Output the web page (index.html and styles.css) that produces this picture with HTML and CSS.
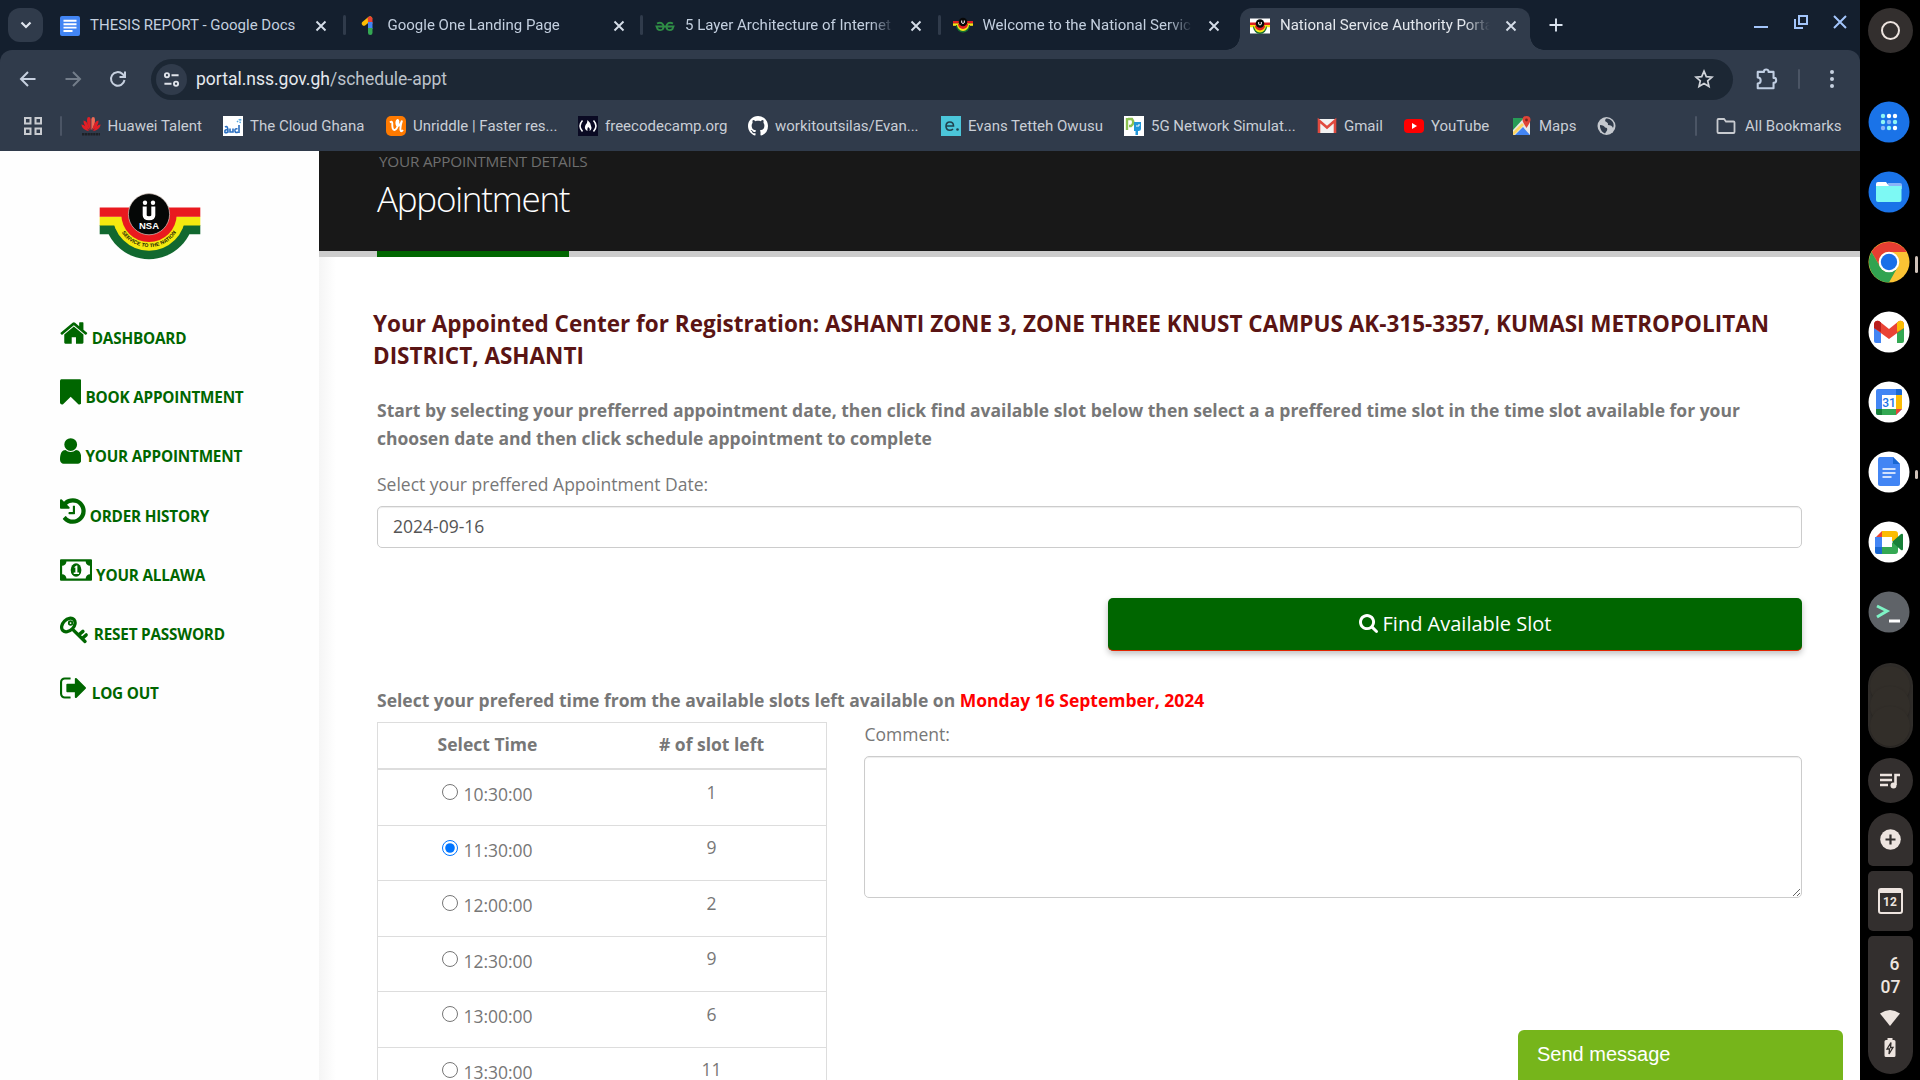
FILE: index.html
```html
<!DOCTYPE html>
<html lang="en">
<head>
<meta charset="utf-8">
<title>National Service Authority Portal</title>
<link rel="stylesheet" href="styles.css">
</head>
<body>
<svg class="defs" width="0" height="0" aria-hidden="true">
  <defs>
    <symbol id="close" viewBox="0 0 12 12"><path d="M1.5 1.5l9 9M10.5 1.5l-9 9" stroke="currentColor" stroke-width="1.9" fill="none"/></symbol>
    <symbol id="nss-fav" viewBox="0 0 20 20">
      <path d="M0 5h20v2.600H0z" fill="#e02020"/><path d="M0 7.400h20v2.400H0z" fill="#f5e616"/>
      <path d="M3 9a7 7.500 0 0 0 14 0z" fill="#16702f"/><path d="M4 8.500a6 6.500 0 0 0 12 0z" fill="#f5e616"/><path d="M5 8a5 5 0 0 0 10 0z" fill="#e02020"/>
      <circle cx="10" cy="6" r="4.300" fill="#080808"/><path d="M8.700 4.500v2.300q1.300 1.400 2.600 0V4.500" stroke="#fff" stroke-width="1" fill="none"/>
    </symbol>
  </defs>
</svg>
<div class="desktop">
  <div class="browser">
    <div class="tabstrip">
      <div class="tab-search"><svg width="12" height="12" viewBox="0 0 12 12"><path d="M1.500 3.500L6 8l4.500-4.500" fill="none" stroke="#dfe5ee" stroke-width="2.200"/></svg></div>
      <div class="tabs">
        <div class="tab">
          <svg class="fav" viewBox="0 0 20 20"><rect width="20" height="20" rx="2" fill="#4285f4"/><path d="M3.500 4.800h13M3.500 8.200h13M3.500 11.600h13M3.500 15h9" stroke="#fff" stroke-width="1.900"/></svg>
          <span class="tab-title">THESIS REPORT - Google Docs</span><svg class="close"><use href="#close"/></svg>
        </div>
        <div class="tab">
          <svg class="fav" viewBox="0 0 20 20"><path d="M6 7.500L12 2.500" stroke="#fbbc04" stroke-width="4.400" stroke-linecap="round"/><path d="M9.500 2a2.600 2.600 0 0 1 5 1v5h-4.500V5z" fill="#ea4335"/><path d="M10 6h4.500v7H10z" fill="#4285f4"/><path d="M10 12h4.500v4.800a2.250 2.250 0 0 1-4.500 0z" fill="#34a853"/></svg>
          <span class="tab-title">Google One Landing Page</span><svg class="close"><use href="#close"/></svg>
        </div>
        <div class="tab">
          <svg class="fav" viewBox="0 0 20 20"><path d="M2 7.500q4-2 6 1 1.500 3-.500 5-3 1.500-5-.500L1.500 10.500h17l-1 2.500q-2 2-5 .500-2-2-.500-5 2-3 6-1" fill="none" stroke="#2f8d46" stroke-width="1.800"/></svg>
          <span class="tab-title">5 Layer Architecture of Internet</span><svg class="close"><use href="#close"/></svg>
        </div>
        <div class="tab">
          <svg class="fav" viewBox="0 0 20 20"><use href="#nss-fav"/></svg>
          <span class="tab-title">Welcome to the National Servic</span><svg class="close"><use href="#close"/></svg>
        </div>
        <div class="tab active">
          <svg class="fav" viewBox="0 0 20 20"><path d="M0 2.500h20v15H0z" fill="#fff"/><use href="#nss-fav" y="1.500"/></svg>
          <span class="tab-title">National Service Authority Porta</span><svg class="close"><use href="#close"/></svg>
        </div>
      </div>
      <svg class="new-tab" viewBox="0 0 14 14"><path d="M7 .500v13M.500 7h13" stroke="#dbe4f0" stroke-width="1.900"/></svg>
      <div class="controls">
        <svg viewBox="0 0 16 16"><path d="M1 13h14" stroke="#a3c5fb" stroke-width="2"/></svg>
        <svg viewBox="0 0 16 16"><path d="M6 2h8v8H6zM2 5v9h8" fill="none" stroke="#a3c5fb" stroke-width="2"/></svg>
        <svg viewBox="0 0 16 16"><path d="M2 2l12 12M14 2L2 14" stroke="#a3c5fb" stroke-width="2"/></svg>
      </div>
    </div>
    <div class="toolbar">
      <div class="nav-buttons">
        <svg viewBox="0 0 20 20" stroke="#c6d0df"><path d="M17.500 10H3M10 3l-7 7 7 7"/></svg>
        <svg viewBox="0 0 20 20" stroke="#737d8a"><path d="M2.500 10H17M10 3l7 7-7 7"/></svg>
        <svg viewBox="0 0 20 20" stroke="#c6d0df"><path d="M16.500 11a6.800 6.800 0 1 1-2-6L17 7.500M17 2.500V8h-5.500"/></svg>
      </div>
      <div class="omnibox">
        <div class="site-info"><svg viewBox="0 0 18 18" fill="none" stroke="#dfe3ea" stroke-width="2"><circle cx="4.200" cy="4.500" r="2.200"/><path d="M9 4.500h7.500M1.500 13.500H9"/><circle cx="13.800" cy="13.500" r="2.200"/></svg></div>
        <span class="url">portal.nss.gov.gh<span class="url-path">/schedule-appt</span></span>
        <svg class="star" viewBox="0 0 20 20"><path d="M10 2.200l2.300 5.400 5.800.5-4.400 3.800 1.300 5.700-5-3-5 3 1.300-5.700L1.900 8.100l5.800-.5z" fill="none" stroke="#d0d4da" stroke-width="1.700"/></svg>
      </div>
      <svg class="puzzle" viewBox="0 0 22 22"><path d="M2.500 4.500h5.700V4a2.100 1.700 0 0 1 4.200 0v.5H17V10h.6a1.800 2.200 0 0 1 0 4.400H17v5.100H2.500v-4.400a2.700 2.700 0 0 0 0-5.400z" fill="none" stroke="#c0cee2" stroke-width="1.900" stroke-linejoin="round"/></svg>
      <i class="bar"></i>
      <svg class="menu" viewBox="0 0 6 20" fill="#c6d0df"><circle cx="3" cy="3" r="2"/><circle cx="3" cy="10" r="2"/><circle cx="3" cy="17" r="2"/></svg>
    </div>
    <div class="bookmarks">
      <svg class="apps" viewBox="0 0 20 20" fill="none" stroke="#c8cbd0" stroke-width="2"><path d="M2 2h5.500v5.500H2zM12.500 2H18v5.500h-5.500zM2 12.500h5.500V18H2zM12.500 12.500H18V18h-5.500z"/></svg>
      <i class="bar"></i>
      <div class="bookmark-list">
        <div class="bm"><svg viewBox="0 0 20 20"><g fill="#e01f26"><path d="M9.600 14Q4.500 7 6.500 1.500Q9 0 9.600 3z"/><path d="M10.400 14Q15.500 7 13.500 1.500Q11 0 10.400 3z" fill="#ef6a55"/><path d="M8.800 14.500Q2 9.500 2.500 4.500Q7 5 8.800 14.500zM11.200 14.500Q18 9.500 17.500 4.500Q13 5 11.200 14.500zM8 15.200Q1 13.500.300 8.500Q5 9 8 15.200zM12 15.200Q19 13.500 19.700 8.500Q15 9 12 15.200z"/></g><path d="M1 18.300h18" stroke="#1d2026" stroke-width="2.600" stroke-dasharray="2.300 .5"/></svg><span>Huawei Talent</span></div>
        <div class="bm"><svg viewBox="0 0 20 20"><path d="M0 0h20v20H0z" fill="#fff"/><path d="M2 11q3-2 3 5-4 2-3-1 0-1.500 3-1.500M7 12.500v3.500h3v-3.500M14.500 13q-3-1-2.500 2 .5 2.500 3 1M16 9v8" fill="none" stroke="#2b6fc0" stroke-width="1.600"/><path d="M14 6l3-3M17 7l1-5" stroke="#56a6dd" stroke-width="1.500" stroke-dasharray="1.500 1"/></svg><span>The Cloud Ghana</span></div>
        <div class="bm"><svg viewBox="0 0 20 20"><rect width="20" height="20" rx="5" fill="#ff7a00"/><path d="M4 6.500q2-2 2.300.500-.300 7 2 7t3.700-5q1-5-.500-5-1.500 1-1 4t2.500 1.500 3-5q-2 7-1.500 9.500t2.500 0" fill="none" stroke="#fff" stroke-width="1.900"/></svg><span>Unriddle | Faster res...</span></div>
        <div class="bm"><svg viewBox="0 0 20 20"><path d="M0 0h20v20H0z" fill="#0a0a23"/><path d="M4.500 4.500q-5 5.500 0 11M15.500 4.500q5 5.500 0 11" fill="none" stroke="#fff" stroke-width="1.500"/><path d="M9.500 4q3.500 3 3.500 6 1.500 3-1.500 5 1-3-1.500-4-1 2-.500 4-4-2-2-6 2-2 2-5z" fill="#fff"/></svg><span>freecodecamp.org</span></div>
        <div class="bm"><svg viewBox="0 0 16 16"><path fill="#fff" d="M8 0C3.580 0 0 3.580 0 8c0 3.540 2.290 6.530 5.470 7.590.4.070.55-.17.55-.38 0-.19-.01-.82-.01-1.490-2.010.37-2.530-.49-2.690-.94-.09-.23-.48-.94-.82-1.130-.28-.15-.68-.52-.01-.53.63-.01 1.080.58 1.230.82.720 1.210 1.870.87 2.330.66.070-.52.280-.87.510-1.070-1.780-.2-3.640-.89-3.640-3.950 0-.87.310-1.590.82-2.150-.08-.2-.36-1.020.08-2.120 0 0 .67-.21 2.200.82.640-.18 1.320-.27 2-.27s1.360.090 2 .27c1.530-1.040 2.200-.82 2.200-.82.440 1.100.16 1.920.08 2.120.51.560.82 1.270.82 2.150 0 3.070-1.870 3.750-3.650 3.950.29.250.54.730.54 1.480 0 1.070-.01 1.930-.01 2.200 0 .21.150.46.550.38A8 8 0 0 0 16 8c0-4.420-3.580-8-8-8z"/></svg><span>workitoutsilas/Evan...</span></div>
        <div class="bm"><svg viewBox="0 0 20 20"><path d="M0 0h20v20H0z" fill="#4bc6da"/><path d="M5 10h7.500q0-4-3.700-4T5 10.300q0 3.800 3.800 4 2 0 3.200-1.300" fill="none" stroke="#21414d" stroke-width="1.600"/><circle cx="16.500" cy="13.500" r="1.300" fill="#21414d"/></svg><span>Evans Tetteh Owusu</span></div>
        <div class="bm"><svg viewBox="0 0 20 20"><path d="M0 0h20v20H0z" fill="#fff"/><path d="M3 2v12M4 3h4q3 4-1 7H5" fill="none" stroke="#8cc152" stroke-width="2.400"/><path d="M10 6h7v7q0 2-2.500 2H14v4h-2.500v-4H10z" fill="#2196d8"/><path d="M12 10h3V8" stroke="#fff" fill="none"/></svg><span>5G Network Simulat...</span></div>
        <div class="bm"><svg viewBox="0 0 20 20"><rect x="1" y="3" width="18" height="14" rx="1.500" fill="#f2f2f2"/><path d="M2 17V4.500l8 7 8-7V17" fill="none" stroke="#e04a3f" stroke-width="2.600"/></svg><span>Gmail</span></div>
        <div class="bm"><svg viewBox="0 0 20 20"><rect y="3" width="20" height="14" rx="4" fill="#f00"/><path d="M8 7v6l5-3z" fill="#fff"/></svg><span>YouTube</span></div>
        <div class="bm"><svg viewBox="0 0 20 20"><path d="M1 2h17v17H1z" fill="#e8e8e8"/><path d="M1 2h11L1 14z" fill="#279b56"/><path d="M3 19l8-8 7 8z" fill="#4285f4"/><path d="M1 16l9-9 2 2-10 10H1z" fill="#fdd663"/><path d="M14.500 0a4 4 0 0 1 4 4q0 2-4 8-4-6-4-8a4 4 0 0 1 4-4z" fill="#df4436"/><circle cx="14.500" cy="4" r="1.400" fill="#7b231e"/></svg><span>Maps</span></div>
        <div class="bm"><svg viewBox="0 0 20 20"><circle cx="9.500" cy="10" r="9" fill="#c4c8ce"/><path d="M3 9q4 0 5 2.500 3 0 2 3l-2 3Q4 16 3 11zM9 2.500Q7 5 9.500 6q2 1 1.500 3 4 0 5 3 2-5-2-8-2-2-5-1.500z" fill="#303b4b"/></svg></div>
      </div>
      <i class="bar"></i>
      <svg class="folder" viewBox="0 0 20 20"><path d="M1.500 4q0-1 1-1H8l2 2.500h7.500q1 0 1 1V16q0 1-1 1h-15q-1 0-1-1z" fill="none" stroke="#c8cbd0" stroke-width="1.800"/></svg>
      <span class="all">All Bookmarks</span>
    </div>
    <div class="page">
      <aside class="sidebar">
        <svg class="logo" viewBox="99 192 102 69">
          <defs>
            <clipPath id="g"><path d="M90 226h120v40H90z"/></clipPath><clipPath id="y"><path d="M90 217h120v40H90z"/></clipPath><clipPath id="r"><path d="M90 208h120v40H90z"/></clipPath>
            <path id="motto" d="M119.300 228.500A33 33 0 0 0 178.700 228.500"/>
          </defs>
          <path d="M99.700 225h100.600v9.200H99.700z" fill="#11682f"/><circle cx="149" cy="214.300" r="45" fill="#11682f" clip-path="url(#g)"/>
          <path d="M99.700 216.500h100.600v9H99.700z" fill="#f4e90f"/><circle cx="149" cy="214.300" r="36.500" fill="#f4e90f" clip-path="url(#y)"/>
          <path d="M99.700 207.500h100.600v9.300H99.700z" fill="#e9191f"/><circle cx="149" cy="214.300" r="27.700" fill="#e9191f" clip-path="url(#r)"/>
          <circle cx="149" cy="214.200" r="20.600" fill="#050706" stroke="#d9c9c0" stroke-width=".7"/>
          <path d="M144.700 206.500v8.700q0 3 4.300 3t4.300-3v-8.700" stroke="#fff" stroke-width="4" fill="none"/><circle cx="145" cy="202.800" r="2.200" fill="#fff"/><circle cx="153" cy="202.800" r="2.200" fill="#fff"/>
          <text x="149" y="229" text-anchor="middle" class="logo-name" textLength="20" lengthAdjust="spacingAndGlyphs">NSA</text>
          <text class="logo-motto"><textPath href="#motto" startOffset="50%" text-anchor="middle">SERVICE TO THE NATION</textPath></text>
        </svg>
        <nav class="menu-list">
          <a><svg class="w-home" viewBox="64 0 1664 1792"><path d="M1472 992v480q0 26-19 45t-45 19h-384v-384h-256v384h-384q-26 0-45-19t-19-45v-480q0-1 .5-3t.5-3l575-474 575 474q1 2 1 6zm223-69l-62 74q-8 9-21 11h-3q-13 0-21-7l-692-577-692 577q-12 8-24 7-13-2-21-11l-62-74q-8-10-7-23.500t11-21.500l719-599q32-26 76-26t76 26l244 204v-195q0-14 9-23t23-9h192q14 0 23 9t9 23v408l219 182q10 8 11 21.500t-7 23.500z"/></svg>DASHBOARD</a>
          <a><svg class="w-narrow" viewBox="256 0 1280 1792"><path d="M1420 128q23 0 44 9 33 13 52.500 41t19.500 62v1289q0 34-19.500 62t-52.500 41q-19 8-44 8-48 0-83-32l-441-424-441 424q-36 33-83 33-23 0-44-9-33-13-52.500-41t-19.500-62v-1289q0-34 19.500-62t52.500-41q21-9 44-9h1048z"/></svg>BOOK APPOINTMENT</a>
          <a><svg class="w-narrow" viewBox="256 0 1280 1792"><path d="M1536 1399q0 109-62.500 187t-150.500 78h-854q-88 0-150.500-78t-62.500-187q0-85 8.500-160.500t31.500-152 58.500-131 94-89 134.500-34.500q131 128 313 128t313-128q76 0 134.500 34.500t94 89 58.500 131 31.500 152 8.500 160.500zm-256-887q0 159-112.500 271.500t-271.500 112.500-271.500-112.500-112.500-271.500 112.500-271.500 271.500-112.500 271.500 112.500 112.500 271.500z"/></svg>YOUR APPOINTMENT</a>
          <a><svg class="w-history" viewBox="128 0 1536 1792"><path d="M1664 896q0 156-61 298t-164 245-245 164-298 61q-172 0-327-72.500t-264-204.500q-7-10-6.500-22.500t8.500-20.500l137-138q10-9 25-9 16 2 23 12 73 95 179 147t225 52q104 0 198.500-40.500t163.500-109.500 109.500-163.500 40.500-198.500-40.500-198.500-109.500-163.500-163.500-109.500-198.500-40.500q-98 0-188 35.500t-160 101.500l137 138q31 30 14 69-17 40-59 40h-448q-26 0-45-19t-19-45v-448q0-42 40-59 39-17 69 14l130 129q107-101 244.500-156.500t284.500-55.500q156 0 298 61t245 164 164 245 61 298zm-640-288v448q0 14-9 23t-23 9h-320q-14 0-23-9t-9-23v-64q0-14 9-23t23-9h224v-352q0-14 9-23t23-9h64q14 0 23 9t9 23z"/></svg>ORDER HISTORY</a>
          <a><svg class="w-money" viewBox="0 0 1920 1792"><path fill-rule="evenodd" d="M60 256h1800q60 0 60 60v1160q0 60-60 60H60q-60 0-60-60V316q0-60 60-60zM384 384q0 106-75 181t-181 75v512q106 0 181 75t75 181h1152q0-106 75-181t181-75V640q-106 0-181-75t-75-181z"/><ellipse cx="960" cy="896" rx="320" ry="400"/><path d="M880 700l110-70h50v420h100v90H820v-90h100V740l-60 40z" fill="#fff"/></svg>YOUR ALLAWA</a>
          <a><svg class="w-key" viewBox="0 0 1834 1792"><g fill="none" stroke="#060"><ellipse cx="515" cy="650" rx="480" ry="340" transform="rotate(-45 515 650)" stroke-width="200"/><circle cx="650" cy="530" r="110" stroke-width="110"/><path d="M840 980l700 680M1200 1220l210-180M1420 1430l190-170" stroke-width="210" stroke-linecap="round"/></g></svg>RESET PASSWORD</a>
          <a><svg class="w-home" viewBox="64 0 1672 1792"><path d="M704 1440q0 4 1 20t.5 26.500-3 23.500-10 19.500-20.500 6.500h-320q-119 0-203.500-84.500t-84.500-203.500v-704q0-119 84.500-203.500t203.500-84.500h320q13 0 22.500 9.500t9.500 22.500q0 4 1 20t.5 26.500-3 23.500-10 19.500-20.500 6.500h-320q-66 0-113 47t-47 113v704q0 66 47 113t113 47h312l11.500 1 11.500 3 8 5.500 7 9 2 13.500zm928-544q0 26-19 45l-544 544q-19 19-45 19t-45-19-19-45v-288h-448q-26 0-45-19t-19-45v-384q0-26 19-45t45-19h448v-288q0-26 19-45t45-19 45 19l544 544q19 19 19 45z"/></svg>LOG OUT</a>
        </nav>
      </aside>
      <main class="content">
        <header class="page-header"><p>YOUR APPOINTMENT DETAILS</p><h1>Appointment</h1></header>
        <div class="stripe"><i></i></div>
        <section class="body">
          <h2>Your Appointed Center for Registration: ASHANTI ZONE 3, ZONE THREE KNUST CAMPUS AK-315-3357, KUMASI METROPOLITAN<br>DISTRICT, ASHANTI</h2>
          <p class="intro">Start by selecting your prefferred appointment date, then click find available slot below then select a a preffered time slot in the time slot available for your<br>choosen date and then click schedule appointment to complete</p>
          <label class="date-label">Select your preffered Appointment Date:</label>
          <div class="field">2024-09-16</div>
          <div class="button"><svg viewBox="64 128 1664 1664"><path d="M1216 832q0-185-131.500-316.500t-316.500-131.500-316.500 131.500-131.500 316.500 131.500 316.500 316.500 131.500 316.500-131.500 131.500-316.500zm512 832q0 52-38 90t-90 38q-54 0-90-38l-343-342q-179 124-399 124-143 0-273.500-55.500t-225-150-150-225-55.500-273.500 55.500-273.500 150-225 225-150 273.500-55.500 273.500 55.500 225 150 150 225 55.500 273.500q0 220-124 399l343 343q37 37 37 90z"/></svg>Find Available Slot</div>
          <p class="slots-title">Select your prefered time from the available slots left available on <span>Monday 16 September, 2024</span></p>
          <div class="columns">
            <div class="slots">
              <div class="row head"><span>Select Time</span><span># of slot left</span></div>
              <div class="row"><label><input type="radio" name="t">10:30:00</label><span>1</span></div>
              <div class="row"><label><input type="radio" name="t" checked>11:30:00</label><span>9</span></div>
              <div class="row"><label><input type="radio" name="t">12:00:00</label><span>2</span></div>
              <div class="row"><label><input type="radio" name="t">12:30:00</label><span>9</span></div>
              <div class="row"><label><input type="radio" name="t">13:00:00</label><span>6</span></div>
              <div class="row"><label><input type="radio" name="t">13:30:00</label><span>11</span></div>
            </div>
            <div class="comment"><label>Comment:</label><textarea></textarea></div>
          </div>
        </section>
      </main>
      <div class="chat">Send message</div>
    </div>
  </div>
  <div class="shelf">
    <div class="launcher"><i></i></div>
    <div class="pinned">
      <svg viewBox="0 0 42 42"><circle cx="21" cy="21" r="20.500" fill="#1a73e8"/><g fill="#8ef5f5"><circle cx="15" cy="15" r="2.200"/><circle cx="15" cy="21" r="2.200"/><circle cx="27" cy="21" r="2.200"/><circle cx="21" cy="27" r="2.200"/></g><g fill="#fff"><circle cx="21" cy="15" r="2.200"/><circle cx="27" cy="15" r="2.200"/><circle cx="27" cy="27" r="2.200"/></g><g fill="#8ab4f8"><circle cx="21" cy="21" r="2.200"/><circle cx="15" cy="27" r="2.200"/></g></svg>
      <svg viewBox="0 0 42 42"><circle cx="21" cy="21" r="20.500" fill="#1a73e8"/><path d="M20 12h12q2 0 2 2v4H18z" fill="#8ab4f8"/><path d="M8 13q0-2 2-2h8l3 4H8z" fill="#fff"/><path d="M8 15h25.500v14q0 2-2 2H10q-2 0-2-2z" fill="#7df9f4"/></svg>
      <svg viewBox="0 0 42 42"><circle cx="21" cy="21" r="20.500" fill="#fbc334"/><path d="M3.500 11A20.500 20.500 0 0 1 38.700 11H21a10 10 0 0 0-8.700 15z" fill="#e63e32"/><path d="M3.500 11A20.500 20.500 0 0 0 21 41.500L29.700 26a10 10 0 0 1-17.400 0z" fill="#31a350"/><circle cx="21" cy="21" r="10.300" fill="#fff"/><circle cx="21" cy="21" r="8.200" fill="#1a6fe8"/></svg>
      <svg viewBox="0 0 42 42"><circle cx="21" cy="21" r="20.500" fill="#fff"/><path d="M6 14h7v18H8q-2 0-2-2z" fill="#4285f4"/><path d="M29 14h7v16q0 2-2 2h-5z" fill="#34a853"/><path d="M6 17v-4q1-4 5-3l10 8 10-8q4-1 5 3v4l-15 11z" fill="#ea4335"/><path d="M6 17v-4q1-4 5-3l2 1.500V21z" fill="#b91f1f"/><path d="M36 17v-4q-1-4-5-3l-2 1.500V21z" fill="#fbbc04"/></svg>
      <svg viewBox="0 0 42 42"><circle cx="21" cy="21" r="20.500" fill="#fff"/><path d="M8 10q0-2 2-2h22q2 0 2 2v18l-6 6H10q-2 0-2-2z" fill="#4285f4"/><path d="M28 8h4q2 0 2 2v4h-6z" fill="#1967d2"/><path d="M28 14h6v14h-6z" fill="#fbbc04"/><path d="M14 28h14v6H14z" fill="#34a853"/><path d="M8 28h6v6h-4q-2 0-2-2z" fill="#188038"/><path d="M28 28h6l-6 6z" fill="#ea4335"/><path d="M14 14h14v14H14z" fill="#fff"/><text x="21" y="25.500" text-anchor="middle" font-family="Roboto" font-size="12" font-weight="500" fill="#1a73e8">31</text></svg>
      <svg viewBox="0 0 42 42"><circle cx="21" cy="21" r="20.500" fill="#fff"/><path d="M10 9q0-3 2-3h13l7 7v20q0 2-2 2H12q-2 0-2-2z" fill="#4285f4"/><path d="M25 6l7 7h-7z" fill="#1967d2"/><path d="M14.500 18h13M14.500 22h13M14.500 26h9" stroke="#fff" stroke-width="1.500"/></svg>
      <svg viewBox="0 0 42 42"><circle cx="21" cy="21" r="20.500" fill="#fff"/><path d="M14 10h13q3 0 3 3v7h-6v-4H14z" fill="#fbbc04"/><path d="M7 17l7-7v7z" fill="#ea4335"/><path d="M7 16h7v11H7z" fill="#4285f4"/><path d="M7 26h7v7H9q-2 0-2-2z" fill="#1967d2"/><path d="M14 26h10v-4h6v8q0 3-3 3H14z" fill="#34a853"/><path d="M24 21l9-8q2-1 2 1v14q0 2-2 1z" fill="#188038"/></svg>
      <svg viewBox="0 0 42 42"><circle cx="21" cy="21" r="20.500" fill="#5f6368"/><path d="M9 15l10 5-10 6" fill="none" stroke="#7ff3c5" stroke-width="3"/><path d="M21 30h11" stroke="#fff" stroke-width="3"/></svg>
    </div>
    <i class="run run-chrome"></i><i class="run run-docs"></i>
    <div class="tray">
      <div class="holding"><i></i><i></i><i></i></div>
      <div class="pod round"><svg width="20" height="16" viewBox="0 0 20 16"><path d="M0 2h12M0 7h12M0 12h8" stroke="#ede4df" stroke-width="2.300"/><path d="M15.500 12V2H20" fill="none" stroke="#ede4df" stroke-width="2.600"/><circle cx="13.500" cy="12.500" r="3" fill="#ede4df"/></svg></div>
      <div class="pod plus"><svg width="21" height="21" viewBox="0 0 21 21"><circle cx="10.500" cy="10.500" r="10.300" fill="#ede4df"/><path d="M10.500 5.500v10M5.500 10.500h10" stroke="#332f2e" stroke-width="2.200"/></svg></div>
      <div class="pod date"><div>12</div></div>
      <div class="pod status"><span>6</span><span>07</span>
        <svg width="20" height="16" viewBox="0 0 20 16"><path d="M0 3.500Q10-3.500 20 3.500L10 16z" fill="#ede4df"/></svg>
        <svg class="battery" width="12" height="19" viewBox="0 0 12 19"><path d="M3.500 0h5v2H10q1.500 0 1.500 1.500v14Q11.500 19 10 19H2Q.500 19 .500 17.500v-14Q.500 2 2 2h1.500z" fill="#ede4df"/><path d="M7 4.500L3 11h2.500L5 16l4-6.500H6.500z" fill="none" stroke="#332f2e" stroke-width="1.300"/></svg>
      </div>
    </div>
  </div>
</div>
</body>
</html>
```
FILE: styles.css
```css
* { box-sizing: border-box; }
html, body { margin: 0; height: 1080px; overflow: hidden; background: #000; }
body { font-family: "Open Sans", "Noto Sans", sans-serif; }
p, h1, h2 { margin: 0; }
svg { display: block; flex: none; }
.defs { position: absolute; }
.desktop { display: flex; width: 1920px; height: 1080px; }

/* Browser window */
.browser { width: 1860px; flex: none; display: flex; flex-direction: column; background: #141f2e; font-family: Roboto, sans-serif; font-size: 15px; color: #c9ced6; }
.tabstrip { height: 50px; flex: none; display: flex; align-items: flex-start; padding-left: 8px; }
.tab-search { width: 35px; height: 34px; margin-top: 8px; border-radius: 12px; background: #303b4b; display: flex; align-items: center; justify-content: center; }
.tabs { display: flex; margin-left: -1px; }
.tab { width: 297.500px; height: 42px; margin-top: 8px; padding: 0 0 1px 18px; display: flex; align-items: center; position: relative; color: #c3cfdf; }
.tab::after { content: ""; position: absolute; right: -6px; top: 7px; width: 3px; height: 20px; border-radius: 2px; background: #303b4b; }
.tab:nth-child(4)::after, .tab.active::after { display: none; }
.tab.active { width: 290px; margin-left: 7.500px; padding-left: 10.500px; background: #303b4b; border-radius: 12px 12px 0 0; color: #e3e7ed; }
.tab.active::before { content: ""; position: absolute; left: -14px; right: -14px; bottom: 0; height: 14px; background: radial-gradient(circle at 0 0, transparent 13.500px, #303b4b 14px) left / 14px 14px no-repeat, radial-gradient(circle at 100% 0, transparent 13.500px, #303b4b 14px) right / 14px 14px no-repeat; }
.fav { width: 20px; height: 20px; margin-bottom: 6px; }
.tab-title { width: 211px; margin: 0 12px 7px 10px; white-space: nowrap; -webkit-mask: linear-gradient(90deg, #000 185px, transparent 210px); mask: linear-gradient(90deg, #000 185px, transparent 210px); }
.tab:first-child .tab-title { -webkit-mask: none; mask: none; }
.close { width: 12px; height: 12px; margin: 0 0 5px 2px; color: #d5dde8; }
.new-tab { width: 14px; height: 14px; margin: 18px 0 0 19px; }
.controls { margin-left: auto; display: flex; gap: 23.500px; padding: 14px 12px 0 0; }
.controls svg { width: 16px; height: 16px; }

.toolbar { height: 50px; flex: none; background: #303b4b; border-radius: 12px 12px 0 0; display: flex; align-items: center; padding: 8px 25px 0 17.500px; }
.nav-buttons { display: flex; gap: 25px; }
.nav-buttons svg { width: 20px; height: 20px; fill: none; stroke-width: 2; }
.omnibox { width: 1582px; height: 41px; margin-left: 23px; border-radius: 21px; background: #1c2734; display: flex; align-items: center; padding: 0 18.500px 0 5px; font-size: 17.500px; color: #e6e9ee; }
.site-info { width: 31px; height: 31px; border-radius: 50%; background: #303b4b; display: flex; align-items: center; justify-content: center; }
.site-info svg { width: 17px; height: 17px; }
.url { margin-left: 9.500px; }
.url-path { color: #bdc3cb; }
.star { width: 20px; height: 20px; margin-left: auto; }
.puzzle { width: 24px; height: 24px; margin: 0 19.500px 0 22px; }
.bar { flex: none; width: 2px; height: 20px; border-radius: 1px; background: #4b5565; }
.menu { width: 6px; height: 20px; margin-left: auto; }

.bookmarks { height: 51px; flex: none; background: #303b4b; display: flex; align-items: center; padding-left: 23px; }
.apps { width: 20px; height: 20px; margin-right: 17px; }
.bookmark-list { width: 1614px; margin-left: 18.500px; display: grid; grid-template-columns: 142.500px 163px 192px 170px 193px 183px 193px 87px 108px 85px 40px; }
.bm { display: flex; align-items: center; gap: 7px; white-space: nowrap; }
.bm svg { width: 20px; height: 20px; }
.folder { width: 22px; height: 20px; margin: 0 8.500px 0 18px; }

/* Portal page */
.page { flex: 1; min-height: 0; overflow: hidden; display: flex; background: #fff; position: relative; font-size: 17.500px; color: #777; font-family: "Open Sans", "Noto Sans", sans-serif; }
.sidebar { width: 319px; flex: none; padding: 41px 0 0 60px; background: #fefefe; }
.logo { width: 102px; height: 69px; margin-left: 39px; }
.logo-name { font: 700 9px "Liberation Sans", sans-serif; fill: #fff; }
.logo-motto { font: 700 5.200px "Liberation Sans", sans-serif; fill: #1d1a05; }
.menu-list { margin-top: 53px; color: #060; font-weight: 700; font-size: 15.300px; letter-spacing: -.2px; }
.menu-list a { height: 59.200px; display: flex; align-items: baseline; gap: 4px; white-space: nowrap; }
.menu-list svg { height: 30px; margin-bottom: -4.300px; fill: #060; position: relative; top: 4px; }
.w-home { width: 27.700px; }
.w-narrow { width: 21.400px; }
.w-history { width: 25.700px; }
.w-money { width: 32.100px; }
.w-key { width: 29.800px; }
.content { flex: 1; min-width: 0; background: linear-gradient(90deg, #f5f5f5, #fff 17px); }
.page-header { height: 100px; background: #181818; padding-left: 58px; overflow: hidden; }
.page-header p { margin: -1px 0 0 2px; font-size: 15.300px; line-height: 22px; color: #6e6e6e; letter-spacing: -.22px; }
.page-header h1 { font-size: 35px; line-height: 42px; margin-top: 6px; font-weight: 300; color: #fff; letter-spacing: -1.250px; }
.stripe { height: 6px; background: #ccc; padding-left: 58px; }
.stripe i { display: block; width: 192px; height: 6px; background: #060; }
.body { padding: 51px 58px 0 58px; }
.body h2 { margin-left: -4px; font-size: 22.500px; line-height: 32px; color: #5a1414; white-space: nowrap; }
.intro { margin-top: 24px; font-weight: 700; line-height: 28px; white-space: nowrap; }
.date-label { display: block; margin-top: 18px; line-height: 28px; }
.field { height: 42px; margin-top: 8px; border: 1px solid #ccc; border-radius: 5px; padding: 0 15px; line-height: 38px; color: #555; background: #fff; box-shadow: inset 0 1px 1px rgba(0,0,0,.075); }
.button { width: 694px; height: 53px; margin: 50px 0 0 auto; padding-bottom: 2px; border-radius: 5px; background: #060; border-bottom: 1px solid #e32400; box-shadow: 0 3px 6px rgba(0,0,0,.25); color: #fff; font-size: 20px; display: flex; align-items: center; justify-content: center; gap: 5px; }
.button svg { width: 19px; height: 19px; fill: #fff; }
.slots-title { margin-top: 35px; line-height: 28px; font-weight: 700; white-space: nowrap; }
.slots-title span { color: #f00; }
.columns { display: flex; gap: 37px; margin-top: 8px; }
.slots { width: 450px; border: 1px solid #ddd; height: 500px; }
.row { display: grid; grid-template-columns: 219px 229px; height: 55.500px; border-bottom: 1px solid #ddd; text-align: center; line-height: 28px; padding-top: 7.500px; }
.row.head { height: 47px; border-bottom-width: 2px; font-weight: 700; padding-top: 7px; }
.row label { padding-top: 2.500px; display: flex; justify-content: center; gap: 5px; }
.row input { width: 16px; height: 16px; margin: 4px 0 0; }
.comment { flex: 1; display: flex; flex-direction: column; }
.comment label { line-height: 28px; margin: -2px 0 8px .5px; }
.comment textarea { width: 100%; height: 142px; border: 1px solid #ccc; border-radius: 5px; box-shadow: inset 0 1px 1px rgba(0,0,0,.075); background: #fff; }
.chat { position: absolute; right: 17px; bottom: 0; width: 325px; height: 50px; padding-left: 19px; border-radius: 6px 6px 0 0; background: #76b51b; color: #fff; font: 20px/48px "Liberation Sans", Arial, sans-serif; }

/* System shelf */
.shelf { width: 60px; background: #000; position: relative; display: flex; flex-direction: column; align-items: center; padding-top: 8px; font-family: Roboto, sans-serif; }
.launcher { width: 45px; height: 45px; border-radius: 50%; background: #332f2e; display: flex; align-items: center; justify-content: center; }
.launcher i { width: 19px; height: 19px; border: 2px solid #ede4df; border-radius: 50%; }
.pinned { margin: 48px 1.500px 0 0; display: flex; flex-direction: column; gap: 28px; }
.pinned svg { width: 42px; height: 42px; }
.run { position: absolute; right: 2px; width: 3px; border-radius: 2px; background: #cfc2b9; }
.run-chrome { top: 256px; height: 17px; }
.run-docs { top: 470px; height: 9px; }
.tray { margin-top: 30px; display: flex; flex-direction: column; align-items: center; width: 45px; color: #ede4df; }
.holding { width: 45px; height: 85px; border-radius: 23px; background: #302d2a; display: flex; flex-direction: column-reverse; align-items: center; padding-bottom: 2px; }
.holding i { width: 40px; height: 40px; border-radius: 50%; background: #322e29; box-shadow: 0 1px 2px #272421; margin-top: -20px; flex: none; }
.pod { width: 45px; background: #332f2e; display: flex; align-items: center; justify-content: center; border-radius: 5px; }
.round { height: 45px; margin-top: 10px; border-radius: 50%; }
.plus { height: 53px; margin-top: 10px; border-radius: 23px 23px 5px 5px; }
.date { height: 60px; margin-top: 5px; }
.date div { width: 25px; height: 26px; border: 2px solid #ede4df; border-top-width: 5px; border-radius: 3px; text-align: center; font-size: 12px; font-weight: 700; line-height: 19px; }
.status { height: 138px; margin-top: 5px; border-radius: 5px 5px 23px 23px; flex-direction: column; justify-content: flex-start; padding-top: 17px; }
.status span { width: 19px; text-align: right; font-size: 17.500px; font-weight: 500; line-height: 23px; }
.status svg { margin-top: 11px; }
.status .battery { margin-top: 12px; }
```
